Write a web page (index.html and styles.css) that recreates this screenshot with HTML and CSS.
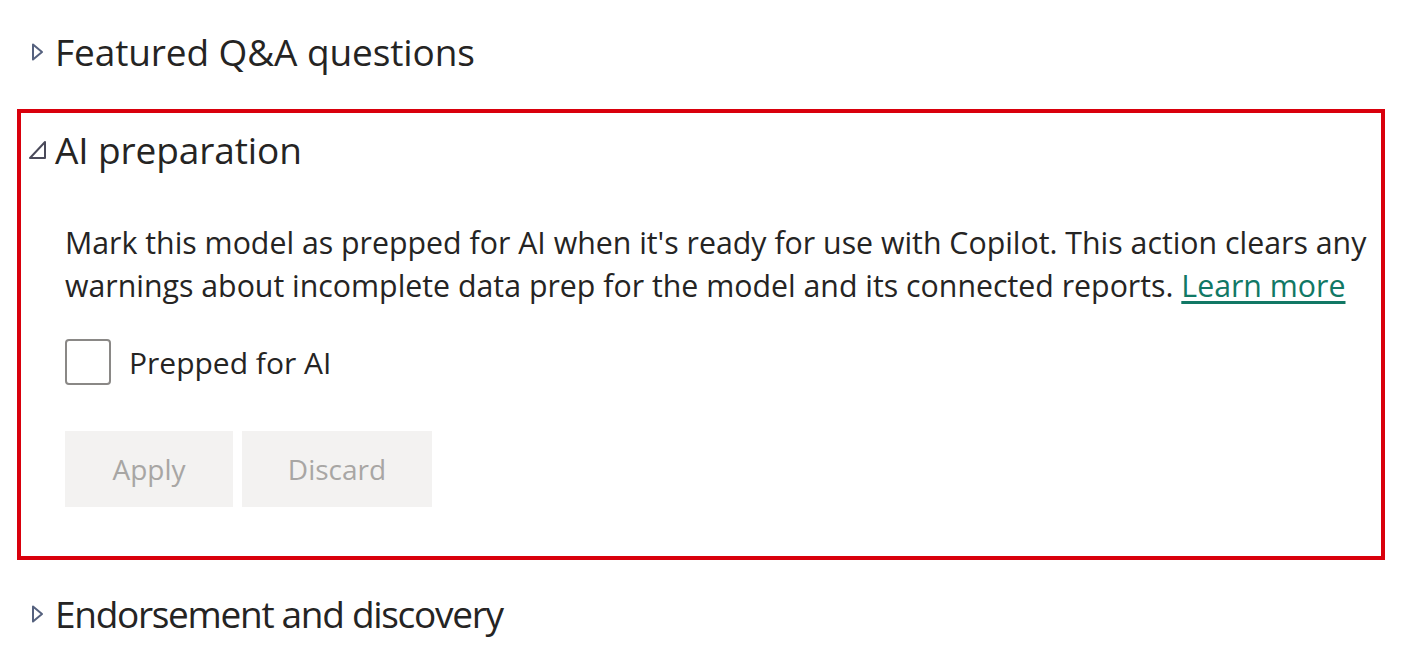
FILE: index.html
```html
<!DOCTYPE html>
<html lang="en">
<head>
<meta charset="utf-8">
<title>AI preparation</title>
<link rel="stylesheet" href="styles.css">
</head>
<body>
<div class="page">
  <div class="section-head collapsed">
    <svg class="caret" width="14" height="20" viewBox="0 0 14 20"><path d="M3 2.5 L12 10 L3 17.5 Z" fill="none" stroke="#55617e" stroke-width="2" stroke-linejoin="round"/></svg>
    <span class="section-title">Featured Q&amp;A questions</span>
  </div>

  <div class="highlight">
    <div class="section-head expanded">
      <svg class="caret-open" width="20" height="20" viewBox="0 0 20 20"><path d="M17 2 L17 18 L2 18 Z" fill="none" stroke="#4a4a5a" stroke-width="2" stroke-linejoin="round"/></svg>
      <span class="section-title">AI preparation</span>
    </div>
    <div class="section-body">
      <p class="desc">Mark this model as prepped for AI when it's ready for use with Copilot. This action clears any warnings about incomplete data prep for the model and its connected reports. <a class="link" href="#">Learn more</a></p>
      <label class="check-row">
        <span class="checkbox"></span>
        <span class="check-label">Prepped for AI</span>
      </label>
      <div class="buttons">
        <button class="btn btn-apply" disabled>Apply</button>
        <button class="btn btn-discard" disabled>Discard</button>
      </div>
    </div>
  </div>

  <div class="section-head collapsed last">
    <svg class="caret" width="14" height="20" viewBox="0 0 14 20"><path d="M3 2.5 L12 10 L3 17.5 Z" fill="none" stroke="#55617e" stroke-width="2" stroke-linejoin="round"/></svg>
    <span class="section-title tight">Endorsement and discovery</span>
  </div>
</div>
</body>
</html>
```

FILE: styles.css
```css
* { box-sizing: border-box; }
html, body { margin: 0; padding: 0; background: #ffffff; }
body {
  font-family: "Open Sans", "Noto Sans", "Liberation Sans", sans-serif;
  color: #252423;
}
.page {
  width: 1403px;
  height: 661px;
  padding: 27px 0 0 17px;
  display: flex;
  flex-direction: column;
}
.section-head {
  display: flex;
  align-items: center;
  height: 50px;
}
.section-title {
  font-size: 37px;
  line-height: 50px;
  color: #252423;
  letter-spacing: -0.1px;
  white-space: nowrap;
}
.section-title.tight { letter-spacing: -1.3px; }
.collapsed .caret { margin-left: 13px; margin-right: 11px; }
.highlight {
  margin-top: 32px;
  width: 1368px;
  height: 451px;
  border: 4px solid #d9000c;
  display: flex;
  flex-direction: column;
  padding: 12px 0 0 7px;
}
.expanded .caret-open { margin-right: 7px; }
.section-body {
  padding: 0 0 0 37px;
  display: flex;
  flex-direction: column;
}
.desc {
  margin: 46px 0 0 0;
  font-size: 30.3px;
  line-height: 43px;
  width: 1318px;
  letter-spacing: 0;
}
.link {
  color: #117865;
  text-decoration: underline;
  text-underline-offset: 4px;
}
.check-row {
  display: flex;
  align-items: center;
  margin-top: 32px;
  gap: 18px;
}
.checkbox {
  width: 46px;
  height: 46px;
  border: 2px solid #8a8886;
  border-radius: 4px;
  background: #fff;
  flex: none;
}
.check-label {
  font-size: 30px;
  color: #252423;
}
.buttons {
  display: flex;
  gap: 9px;
  margin-top: 46px;
}
.btn {
  height: 76px;
  border: none;
  background: #f3f2f1;
  color: #a8a6a4;
  font-family: inherit;
  font-size: 28px;
  padding: 0;
}
.btn-apply { width: 168px; }
.btn-discard { width: 190px; }
.last { margin-top: 29px; }
```
